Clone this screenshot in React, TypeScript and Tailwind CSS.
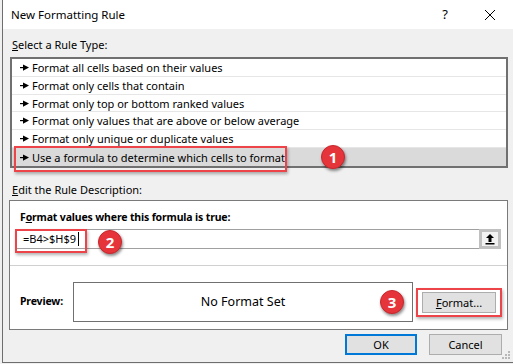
import React from 'react';

const rules = [
  'Format all cells based on their values',
  'Format only cells that contain',
  'Format only top or bottom ranked values',
  'Format only values that are above or below average',
  'Format only unique or duplicate values',
  'Use a formula to determine which cells to format',
];

function RuleArrow() {
  return (
    <svg width="9" height="7" viewBox="0 0 9 7" className="shrink-0">
      <rect x="0" y="3" width="4" height="1.2" fill="#000" />
      <polygon points="3,0.5 9,3.6 3,6.7" fill="#000" />
    </svg>
  );
}

function Badge({ n }: { n: string }) {
  return (
    <div className="w-[24px] h-[24px] rounded-full bg-[#e5353b] border border-[#c9262c] shadow-[1px_2px_3px_rgba(0,0,0,0.45)] flex items-center justify-center text-white text-[15px] font-bold leading-none">
      {n}
    </div>
  );
}

export default function App() {
  return (
    <div className="w-[513px] h-[364px] bg-[#f0f0f0] relative overflow-hidden text-[11px] text-black font-['Segoe_UI','Noto_Sans',sans-serif]">
      <div className="ml-[2px] h-[363px] border-l border-b border-[#6e6e6e] flex flex-col">
        {/* title bar */}
        <div className="h-[29px] bg-white flex items-center pl-[8px] shrink-0">
          <span className="text-[11.5px]">New Formatting Rule</span>
          <span className="ml-auto text-[13px] mr-[36px]">?</span>
          <svg width="12" height="12" viewBox="0 0 12 12" className="mr-[17px]">
            <path d="M1 1L11 11M11 1L1 11" stroke="#000" strokeWidth="1" />
          </svg>
        </div>

        <div className="pl-[7px] pr-[5px] flex flex-col">
          <div className="mt-[8px] h-[16px] leading-[16px] pl-[2px]">
            <span className="underline">S</span>elect a Rule Type:
          </div>

          {/* rule list */}
          <div className="mt-[4px] h-[111px] border-2 border-[#707070] bg-white flex flex-col">
            {rules.map((r, i) => (
              <div
                key={r}
                className={`h-[18px] flex items-center gap-[3px] pl-[8px] ${
                  i === rules.length - 1 ? 'bg-[#dadada]' : 'border-b border-[#e6e6e6]'
                }`}
              >
                <RuleArrow />
                <span className="leading-none">{r}</span>
              </div>
            ))}
          </div>

          <div className="mt-[14px] h-[16px] leading-[16px] pl-[2px]">
            <span className="underline">E</span>dit the Rule Description:
          </div>

          {/* rule description group */}
          <div className="mt-[2px] h-[130px] border border-[#7a7a7a] bg-white flex flex-col ml-[-1px]">
            <div className="mt-[8px] h-[16px] leading-[16px] pl-[10px] font-bold text-[10.5px] tracking-[-0.15px]">
              F<span className="underline">o</span>rmat values where this formula is true:
            </div>
            <div className="mt-[4px] mx-[6px] h-[20px] border border-[#a0a0a0] flex items-center">
              <span className="pl-[6px] flex items-center">
                =B4&gt;$H$9
                <span className="ml-[2px] w-[1px] h-[14px] bg-black" />
              </span>
              <div className="ml-auto w-[22px] h-[20px] mr-[-1px] border-[3px] border-[#c0c0c0] bg-[#f2f2f2] flex items-center justify-center">
                <svg width="10" height="12" viewBox="0 0 10 12">
                  <path d="M5 1L1 5H3.5V9H6.5V5H9Z" fill="#000" />
                  <rect x="0.5" y="10" width="9" height="1.5" fill="#000" />
                </svg>
              </div>
            </div>
            <div className="mt-[16px] h-[1px] bg-[#d0d0d0]" />
            <div className="mt-[16px] flex items-center pl-[10px]">
              <span className="font-bold w-[53px] text-[10.5px] tracking-[-0.15px]">Preview:</span>
              <div className="w-[340px] h-[40px] border border-[#707070] flex items-center justify-center text-[12.5px]">
                No Format Set
              </div>
              <button className="ml-[9px] w-[74px] h-[21px] bg-[#e1e1e1] border border-[#adadad] flex items-center justify-center leading-none">
                <span className="underline">F</span>ormat...
              </button>
            </div>
          </div>

          {/* footer buttons */}
          <div className="mt-[4px] flex items-center justify-end gap-[12px] pr-[6px]">
            <button className="w-[72px] h-[21px] bg-[#e1e1e1] border-2 border-[#0078d7] flex items-center justify-center leading-none">
              OK
            </button>
            <button className="w-[73px] h-[21px] bg-[#e1e1e1] border border-[#adadad] flex items-center justify-center leading-none">
              Cancel
            </button>
          </div>
        </div>
      </div>

      {/* resize grip */}
      <svg width="10" height="10" viewBox="0 0 10 10" className="absolute left-[501px] top-[350px]">
        <rect x="7" y="1" width="2" height="2" fill="#b8b8b8" />
        <rect x="4" y="4" width="2" height="2" fill="#b8b8b8" />
        <rect x="7" y="4" width="2" height="2" fill="#b8b8b8" />
        <rect x="1" y="7" width="2" height="2" fill="#b8b8b8" />
        <rect x="4" y="7" width="2" height="2" fill="#b8b8b8" />
        <rect x="7" y="7" width="2" height="2" fill="#b8b8b8" />
      </svg>

      {/* annotations */}
      <div className="absolute left-[14px] top-[146px] w-[273px] h-[26px] border-2 border-[#ec4449] shadow-[1px_2px_3px_rgba(0,0,0,0.3)]" />
      <div className="absolute left-[15px] top-[229px] w-[72px] h-[24px] border-2 border-[#ec4449] shadow-[1px_2px_3px_rgba(0,0,0,0.3)]" />
      <div className="absolute left-[416px] top-[288px] w-[86px] h-[29px] border-2 border-[#ec4449] shadow-[1px_2px_3px_rgba(0,0,0,0.3)]" />
      <div className="absolute left-[321px] top-[145px]"><Badge n="1" /></div>
      <div className="absolute left-[98px] top-[230px]"><Badge n="2" /></div>
      <div className="absolute left-[380px] top-[290px]"><Badge n="3" /></div>
    </div>
  );
}
